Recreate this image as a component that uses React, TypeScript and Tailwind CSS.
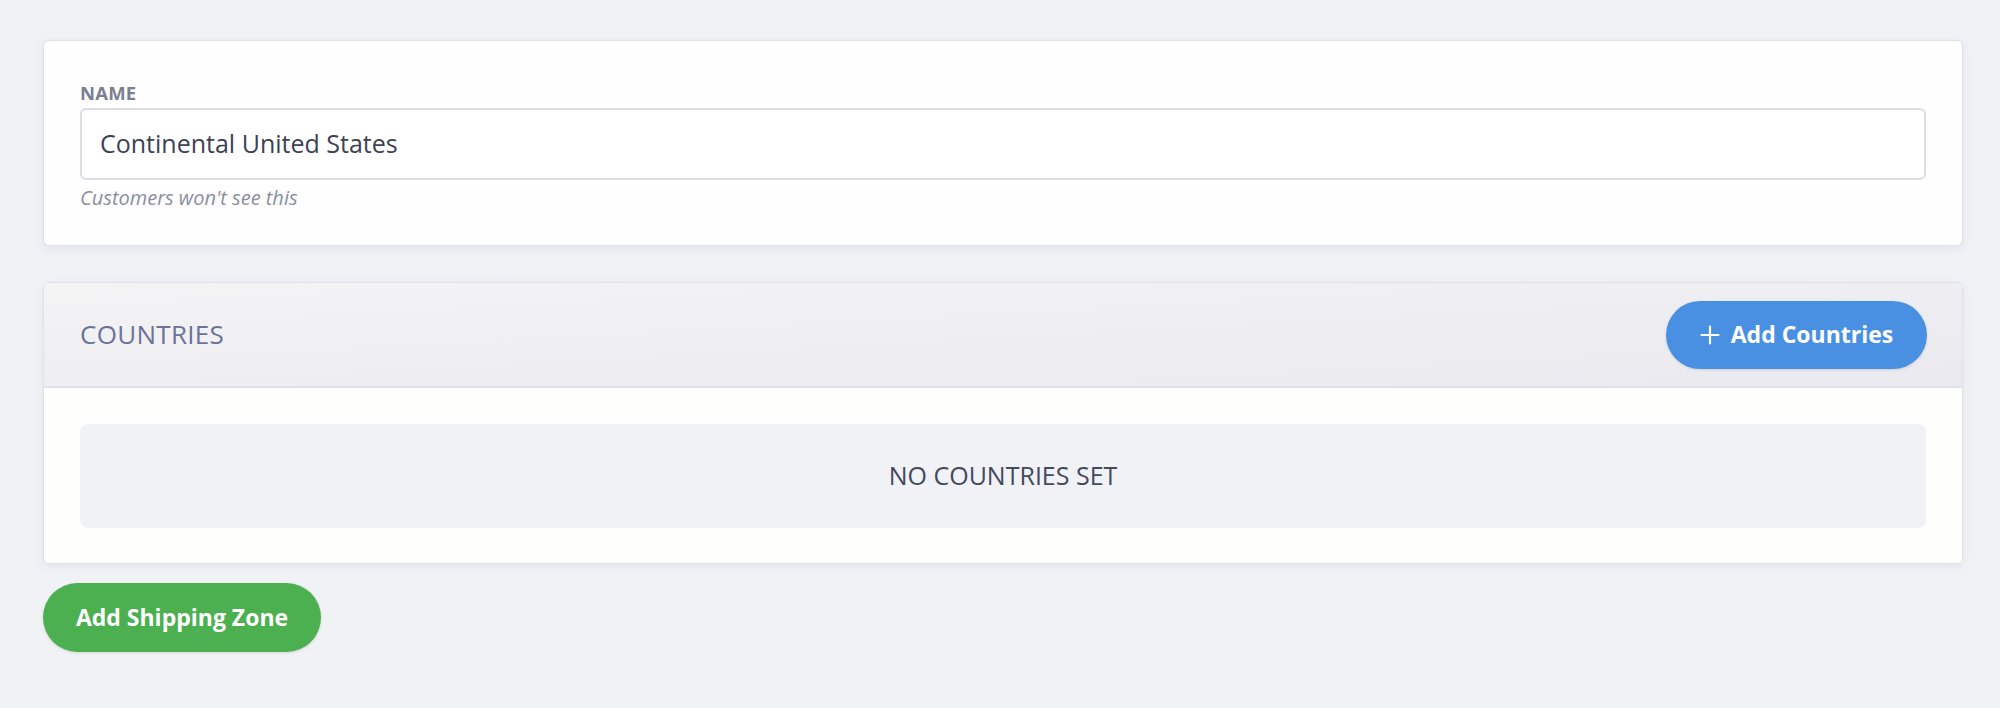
import React from 'react';

const font = { fontFamily: '"Open Sans", "Noto Sans", Arial, sans-serif' };

const PlusIcon: React.FC = () => (
  <svg width="20" height="20" viewBox="0 0 20 20" fill="none" stroke="currentColor" strokeWidth="2.2" strokeLinecap="round">
    <path d="M10 1.5v17M1.5 10h17" />
  </svg>
);

const App: React.FC = () => {
  return (
    <div className="min-h-[708px] bg-[#f1f2f6] pt-[40px] pl-[43px] pr-[37px]" style={font}>
      {/* name card */}
      <div className="bg-[#fefefe] border border-[#dfe0e8] rounded-[6px] shadow-[0_3px_8px_rgba(200,202,215,0.35)] px-[36px] pt-[36px] pb-[34px]">
        <label className="block text-[18.5px] leading-[31px] font-bold text-[#7a7f93] tracking-[0.2px]">NAME</label>
        <div className="h-[72px] border-2 border-[#dcdde6] rounded-[6px] bg-white flex items-center px-[18px]">
          <span className="text-[25px] text-[#3d4154]">Continental United States</span>
        </div>
        <p className="mt-[5px] text-[20px] italic text-[#8a8ea0] leading-[26px]">Customers won't see this</p>
      </div>

      {/* countries card */}
      <div className="mt-[36px] bg-white border border-[#dfe0e8] rounded-[6px] shadow-[0_3px_8px_rgba(200,202,215,0.35)] overflow-hidden">
        <div className="h-[105px] flex items-center justify-between pl-[36px] pr-[35px] bg-gradient-to-br from-[#f4f4f5] to-[#e9e9ef] border-b-2 border-[#dfe0e8]">
          <span className="text-[26px] text-[#6b739b] tracking-[0.3px]">COUNTRIES</span>
          <button className="h-[68px] w-[261px] rounded-full bg-[#4a90e2] text-white flex items-center justify-center gap-[11px] text-[23px] font-bold shadow-[0_1px_3px_rgba(0,0,0,0.12)]">
            <PlusIcon />
            Add Countries
          </button>
        </div>
        <div className="bg-[#fefefc] px-[36px] pt-[36px] pb-[35px]">
          <div className="h-[104px] rounded-[8px] bg-[#f1f2f6] flex items-center justify-center text-[25px] text-[#444a5e]">
            NO COUNTRIES SET
          </div>
        </div>
      </div>

      <button className="mt-[19px] h-[69px] w-[278px] rounded-full bg-[#4caf50] text-white text-[23px] font-bold shadow-[0_1px_3px_rgba(0,0,0,0.12)]">
        Add Shipping Zone
      </button>
    </div>
  );
};

export default App;
